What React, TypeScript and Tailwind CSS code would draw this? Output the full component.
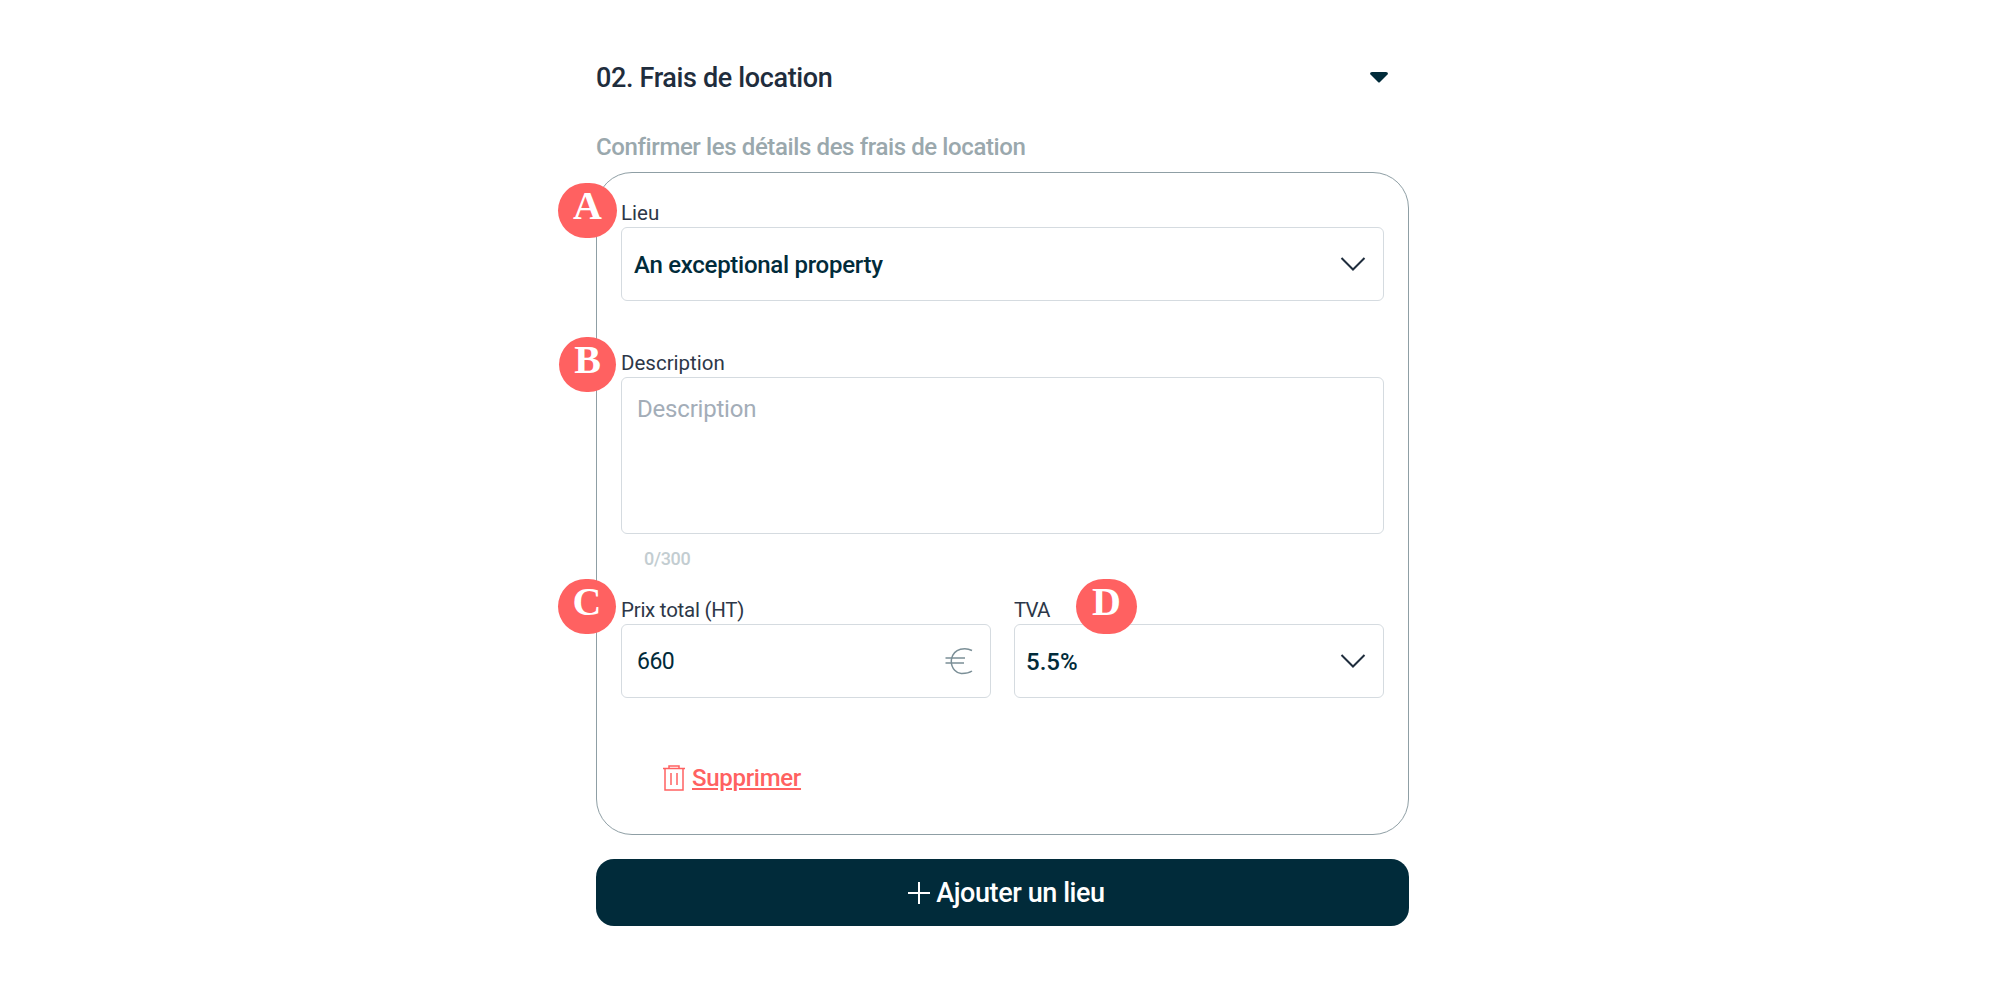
import React from 'react';

const font = { fontFamily: 'Roboto, sans-serif' };

const Badge: React.FC<{ letter: string; className: string }> = ({ letter, className }) => (
  <div
    className={`absolute flex h-[55px] items-center justify-center rounded-full bg-[#ff6161] pb-[10px] font-['Liberation_Serif',serif] text-[40px] font-bold leading-none text-white ${className}`}
  >
    {letter}
  </div>
);

const Chevron = () => (
  <svg width="26" height="16" viewBox="0 0 26 16" fill="none" className="shrink-0">
    <path d="M1.5 2 L13 13.5 L24.500 2" stroke="#1f2d3d" strokeWidth="2" />
  </svg>
);

const Euro = () => (
  <svg width="28" height="28" viewBox="0 0 28 28" fill="none" stroke="#7b8f97" strokeWidth="1.5" className="shrink-0">
    <path d="M27 3.500 C21 0.500 9 0.500 6.500 12 C5 22 13 27 17 26.500 C21 26.500 24 26 27 24" />
    <path d="M0.500 11 H20 M0.500 16 H19" />
  </svg>
);

const Trash = () => (
  <svg width="22" height="26" viewBox="0 0 22 26" fill="none" stroke="#ff6161" strokeWidth="1.5" className="shrink-0">
    <path d="M0 3.500 H22 M6 3.500 V1 H16 V3.500" />
    <path d="M2 3.500 V25 H20 V3.500" />
    <path d="M8 8 V20 M14 8 V20" />
  </svg>
);

const Label: React.FC<{ children: React.ReactNode; className?: string }> = ({ children, className = '' }) => (
  <div className={`h-[27px] text-[20.5px] leading-[27px] text-[#2d3748] ${className}`}>{children}</div>
);

export default function App() {
  return (
    <div className="h-[1000px] bg-white" style={font}>
      <div className="relative ml-[596px] w-[813px] pt-[61px]">
        <div className="flex h-[32px] items-center justify-between pr-[21px]">
          <h2 className="pt-[2px] text-[27px] font-medium leading-[32px] tracking-[-0.36px] text-[#1f2d3d]">02. Frais de location</h2>
          <svg width="18" height="11" viewBox="0 0 18 11" fill="#012b3a">
            <path d="M0 2 Q0 0 2 0 H16 Q18 0 18 2 L10 10 Q9 11 8 10 Z" />
          </svg>
        </div>

        <p className="mt-[39px] h-[28px] pt-[1px] text-[24px] font-medium leading-[28px] tracking-[-0.39px] text-[#9aa8ad]">
          Confirmer les détails des frais de location
        </p>

        <div className="mt-[12px] rounded-[36px] border border-[#8f9fa5] px-[24px] pt-[27px] pb-[42px]">
          <Label>Lieu</Label>
          <div className="flex h-[74px] items-center justify-between rounded-[6px] border border-[#d5dbe0] pr-[17px] pl-[12px]">
            <span className="pt-[1px] text-[24px] font-medium tracking-[-0.28px] text-[#012b3a]">An exceptional property</span>
            <Chevron />
          </div>

          <div className="mt-[49px]">
            <Label>Description</Label>
            <div className="h-[157px] rounded-[6px] border border-[#d5dbe0] px-[15px] pt-[15px] text-[24px] leading-[32px] tracking-[-0.2px] text-[#a3adb8]">
              Description
            </div>
          </div>
          <div className="mt-[13px] h-[24px] pl-[23px] text-[18px] font-medium leading-[24px] tracking-[-0.3px] text-[#c3cdd1]">0/300</div>

          <div className="mt-[26px] grid grid-cols-2 gap-[23px]">
            <div>
              <Label className="tracking-[-0.25px]">Prix total (HT)</Label>
              <div className="flex h-[74px] items-center justify-between rounded-[6px] border border-[#d5dbe0] pr-[17px] pl-[15px]">
                <span className="pt-[2px] text-[23px] tracking-[-0.5px] text-[#012b3a]">660</span>
                <Euro />
              </div>
            </div>
            <div>
              <Label className="tracking-[-0.9px]">TVA</Label>
              <div className="flex h-[74px] items-center justify-between rounded-[6px] border border-[#d5dbe0] pr-[17px] pl-[11px]">
                <span className="pt-[1px] text-[24px] font-medium text-[#012b3a]">5.5%</span>
                <Chevron />
              </div>
            </div>
          </div>

          <div className="mt-[66px] flex h-[28px] items-center gap-[6px] pl-[42px]">
            <Trash />
            <span className="ml-[1px] text-[24px] font-medium leading-[28px] tracking-[-0.3px] text-[#ff6161] underline">Supprimer</span>
          </div>
        </div>

        <button className="mt-[24px] flex h-[67px] w-full items-center justify-center gap-[6px] rounded-[18px] bg-[#012b3a] pl-[8px] text-[27px] font-medium tracking-[-0.42px] text-white">
          <svg width="22" height="22" viewBox="0 0 22 22" stroke="#ffffff" strokeWidth="2">
            <path d="M11 0 V22 M0 11 H22" />
          </svg>
          <span className="pt-[1px]">Ajouter un lieu</span>
        </button>

        <Badge letter="A" className="top-[183px] left-[-38px] w-[59px]" />
        <Badge letter="B" className="top-[337px] left-[-37px] w-[57px]" />
        <Badge letter="C" className="top-[579px] left-[-38px] w-[58px]" />
        <Badge letter="D" className="top-[579px] left-[480px] w-[61px]" />
      </div>
    </div>
  );
}
